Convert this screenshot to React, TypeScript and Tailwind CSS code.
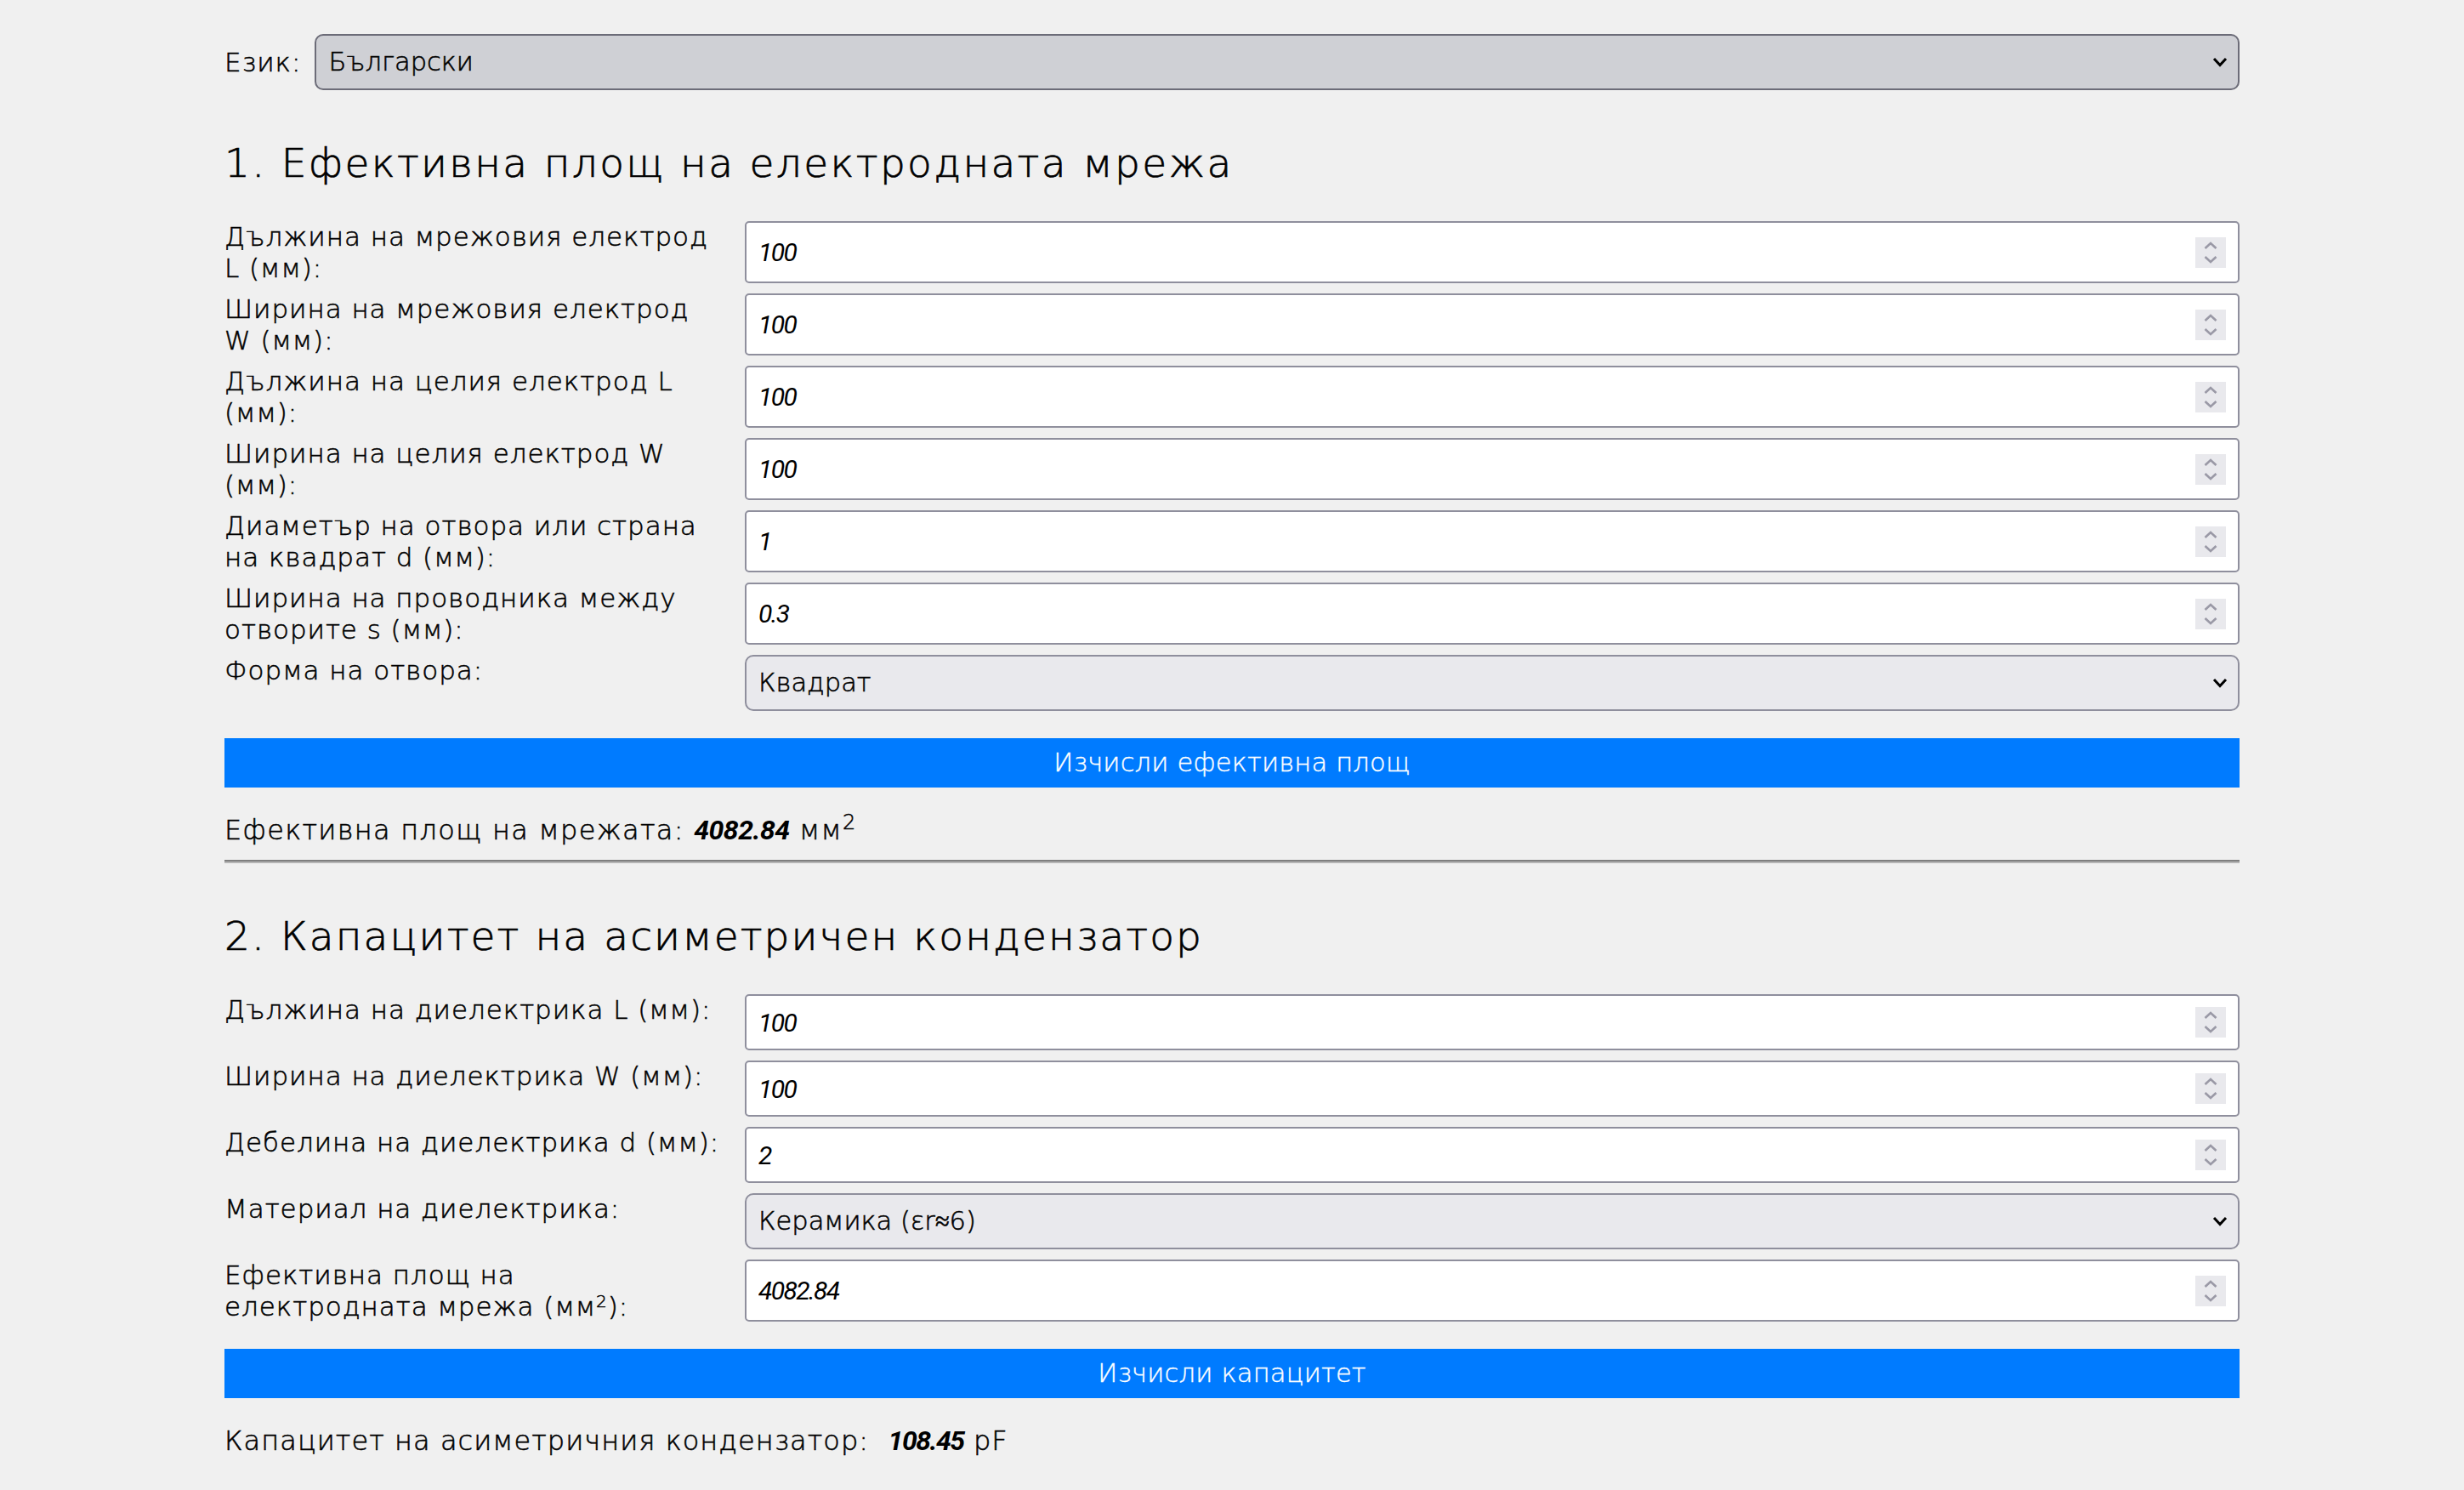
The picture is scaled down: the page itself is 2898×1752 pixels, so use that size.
const FONT = "font-['DejaVu_Sans'] font-extralight";
const INK = "[-webkit-text-stroke:0.55px_#000]";
const DIGIT = "font-[Roboto] font-normal italic tracking-[-1.6px] text-[30px] [-webkit-text-stroke:0]";

function NumberField({ value }: { value: string }) {
  return (
    <div className="flex items-center bg-white border-2 border-[#8f8f9d] rounded-[5px] pl-[14px] pr-[14px] min-h-[66px] h-full">
      <input readOnly value={value} className={"flex-1 min-w-0 outline-none bg-transparent text-black " + DIGIT} />
      <div className="w-9 h-9 bg-[#e9e9ed] flex items-center justify-center shrink-0">
        <svg width="16" height="28" viewBox="0 0 16 28" fill="none" stroke="#9a99a6" strokeWidth="2.6">
          <path d="M1.5 9 L8 3 L14.5 9" />
          <path d="M1.5 19 L8 25 L14.5 19" />
        </svg>
      </div>
    </div>
  );
}

function SelectField({ value, dark }: { value: string; dark?: boolean }) {
  return (
    <div
      className={
        "flex items-center border-2 rounded-[10px] h-[66px] pr-[12px] " +
        (dark ? "bg-[#cfd0d5] border-[#6c6c78]" : "bg-[#e9e9ed] border-[#8f8f9d]")
      }
    >
      <select
        defaultValue={value}
        className={"flex-1 min-w-0 appearance-none outline-none bg-transparent pl-[14px] text-[30.5px] text-black " + FONT + " " + INK}
      >
        <option>{value}</option>
      </select>
      <svg width="18" height="12" viewBox="0 0 18 12" fill="none" stroke="#000" strokeWidth="3">
        <path d="M2 2 L9 9.5 L16 2" />
      </svg>
    </div>
  );
}

function Row({ label, children }: { label: React.ReactNode; children: React.ReactNode }) {
  return (
    <>
      <label className="text-[31px] tracking-[0.95px] leading-[36.5px]">{label}</label>
      {children}
    </>
  );
}

function Button({ label }: { label: string }) {
  return (
    <button className={"block w-full h-[58px] bg-[#007bff] text-white text-[30.5px] tracking-[0.2px] text-center font-['DejaVu_Sans'] font-extralight [-webkit-text-stroke:0.4px_#fff]"}>
      {label}
    </button>
  );
}

export default function App() {
  return (
    <div className={"min-h-[1752px] bg-[#f0f0f0] text-black px-[264px] pt-[40px] " + FONT + " " + INK}>
      <div className="flex items-center gap-[16px]">
        <label className="text-[31px] tracking-[0.95px]">Език:</label>
        <div className="flex-1">
          <SelectField value="Български" dark />
        </div>
      </div>

      <h2 className="text-[47px] tracking-[2.35px] leading-[60px] mt-[56px] mb-[38px] [-webkit-text-stroke:0.7px_#000]">1. Ефективна площ на електродната мрежа</h2>

      <div className="grid grid-cols-[586px_1fr] gap-x-[26px] gap-y-[12px]">
        <Row label={<>Дължина на мрежовия електрод<br />L (мм):</>}><NumberField value="100" /></Row>
        <Row label={<>Ширина на мрежовия електрод<br />W (мм):</>}><NumberField value="100" /></Row>
        <Row label={<>Дължина на целия електрод L<br />(мм):</>}><NumberField value="100" /></Row>
        <Row label={<>Ширина на целия електрод W<br />(мм):</>}><NumberField value="100" /></Row>
        <Row label="Диаметър на отвора или страна на квадрат d (мм):"><NumberField value="1" /></Row>
        <Row label="Ширина на проводника между отворите s (мм):"><NumberField value="0.3" /></Row>
        <Row label="Форма на отвора:"><SelectField value="Квадрат" /></Row>
      </div>

      <div className="mt-[32px]">
        <Button label="Изчисли ефективна площ" />
      </div>

      <p className="text-[32px] tracking-[1.3px] leading-[40px] mt-[30px]">
        Ефективна площ на мрежата: <span className="font-[Roboto] font-bold italic tracking-[-0.5px] text-[32px] [-webkit-text-stroke:0]">4082.84</span> мм<sup className="text-[24px]">2</sup>
      </p>

      <hr className="mt-[15px] h-[4px] border-0 border-t-2 border-b-2 border-t-[#7f7f7f] border-b-[#b5b5b5]" />

      <h2 className="text-[47px] tracking-[2.1px] leading-[60px] mt-[56px] mb-[38px] [-webkit-text-stroke:0.7px_#000]">2. Капацитет на асиметричен кондензатор</h2>

      <div className="grid grid-cols-[586px_1fr] gap-x-[26px] gap-y-[12px]">
        <Row label="Дължина на диелектрика L (мм):"><NumberField value="100" /></Row>
        <Row label="Ширина на диелектрика W (мм):"><NumberField value="100" /></Row>
        <Row label="Дебелина на диелектрика d (мм):"><NumberField value="2" /></Row>
        <Row label="Материал на диелектрика:"><SelectField value="Керамика (εr≈6)" /></Row>
        <Row label={<>Ефективна площ на<br />електродната мрежа (мм<sup className="text-[20px]">2</sup>):</>}><NumberField value="4082.84" /></Row>
      </div>

      <div className="mt-[32px]">
        <Button label="Изчисли капацитет" />
      </div>

      <p className="text-[32px] tracking-[1.05px] leading-[40px] mt-[30px] whitespace-pre">
        {"Капацитет на асиметричния кондензатор:  "}<span className="font-[Roboto] font-bold italic tracking-[-1.5px] text-[32px] [-webkit-text-stroke:0]">108.45</span> pF
      </p>
    </div>
  );
}
